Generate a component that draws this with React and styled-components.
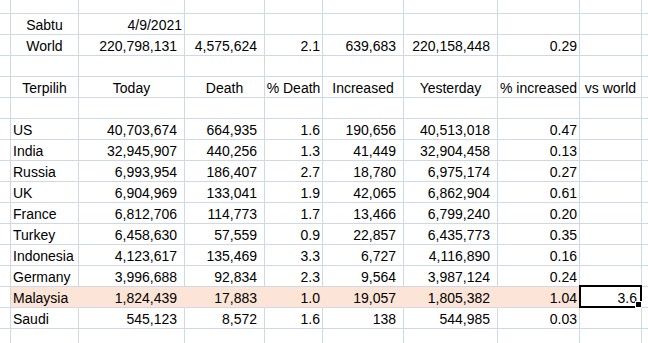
import React from "react";
import styled, { createGlobalStyle } from "styled-components";

const GRID = "#D0D7E5";
const FILL = "#FCE4D6";

const Global = createGlobalStyle`
  html, body { margin: 0; padding: 0; background: #fff; overflow: hidden; }
  body { font-family: "Liberation Sans", Arial, sans-serif; }
`;

const Sheet = styled.div`
  width: 648px;
  height: 343px;
  overflow: hidden;
  display: flex;
  flex-direction: column;
  font-family: "Liberation Sans", Arial, sans-serif;
  font-size: 14px;
  color: #000;
  background: #fff;
`;

const Row = styled.div`
  display: grid;
  grid-template-columns: 11px 68px 106px 80px 58px 81px 94px 82px 62px 1fr;
  height: ${(p) => p.$h ?? 21}px;
  flex: none;
`;

const Cell = styled.div`
  position: relative;
  box-sizing: border-box;
  border-right: ${(p) =>
    p.$last ? "none" : `1px solid ${p.$joined ? FILL : GRID}`};
  border-bottom: 1px solid ${GRID};
  background: ${(p) => (p.$fill ? FILL : "#fff")};
  padding: 2px ${(p) => p.$pr ?? 2}px 0 ${(p) => p.$pl ?? 2}px;
  line-height: 18px;
  text-align: ${(p) => p.$align || "left"};
  white-space: nowrap;
`;

const Selection = styled.div`
  position: absolute;
  left: -1px;
  right: -1px;
  top: -2px;
  bottom: -1px;
  border: 2px solid #000;
  pointer-events: none;
  z-index: 2;
`;

const FillHandle = styled.div`
  position: absolute;
  right: -1px;
  bottom: -1px;
  width: 5px;
  height: 5px;
  background: #000;
  border: 1px solid #fff;
  z-index: 3;
`;

const KIND = {
  name: { $align: "left", $pl: 2, $pr: 2 },
  center: { $align: "center", $pl: 0, $pr: 0 },
  comma: { $align: "right", $pr: 7 },
  dec: { $align: "right", $pr: 2 },
  date: { $align: "right", $pr: 2 },
};

const DATA_KINDS = ["name", "comma", "comma", "dec", "comma", "comma", "dec", "dec"];

function SheetRow({ cells = [], kinds = DATA_KINDS, fillTo = -1, selectedCol = -1, h }) {
  return (
    <Row $h={h}>
      <Cell />
      {Array.from({ length: 8 }).map((_, i) => {
        const fill = i <= fillTo;
        const joined = i < fillTo;
        const sel = i === selectedCol;
        return (
          <Cell
            key={i}
            {...KIND[kinds[i] || "name"]}
            $fill={fill}
            $joined={joined}
            {...(sel ? { $pr: 4 } : {})}
          >
            {cells[i] ?? ""}
            {sel && (
              <>
                <Selection />
                <FillHandle />
              </>
            )}
          </Cell>
        );
      })}
      <Cell $last />
    </Row>
  );
}

const countries = [
  ["US", "40,703,674", "664,935", "1.6", "190,656", "40,513,018", "0.47"],
  ["India", "32,945,907", "440,256", "1.3", "41,449", "32,904,458", "0.13"],
  ["Russia", "6,993,954", "186,407", "2.7", "18,780", "6,975,174", "0.27"],
  ["UK", "6,904,969", "133,041", "1.9", "42,065", "6,862,904", "0.61"],
  ["France", "6,812,706", "114,773", "1.7", "13,466", "6,799,240", "0.20"],
  ["Turkey", "6,458,630", "57,559", "0.9", "22,857", "6,435,773", "0.35"],
  ["Indonesia", "4,123,617", "135,469", "3.3", "6,727", "4,116,890", "0.16"],
  ["Germany", "3,996,688", "92,834", "2.3", "9,564", "3,987,124", "0.24"],
  ["Malaysia", "1,824,439", "17,883", "1.0", "19,057", "1,805,382", "1.04", "3.6"],
  ["Saudi", "545,123", "8,572", "1.6", "138", "544,985", "0.03"],
];

const headers = ["Terpilih", "Today", "Death", "% Death", "Increased", "Yesterday", "% increased", "vs world"];

export default function App() {
  return (
    <>
      <Global />
      <Sheet>
        <SheetRow h={14} />
        <SheetRow cells={["Sabtu", "4/9/2021"]} kinds={["center", "date"]} />
        <SheetRow
          cells={["World", "220,798,131", "4,575,624", "2.1", "639,683", "220,158,448", "0.29"]}
          kinds={["center", "comma", "comma", "dec", "comma", "comma", "dec", "dec"]}
        />
        <SheetRow />
        <SheetRow cells={headers} kinds={Array(8).fill("center")} />
        <SheetRow />
        {countries.map((c) => (
          <SheetRow
            key={c[0]}
            cells={c}
            fillTo={c[0] === "Malaysia" ? 6 : -1}
            selectedCol={c[0] === "Malaysia" ? 7 : -1}
          />
        ))}
        <SheetRow h={21} />
      </Sheet>
    </>
  );
}
